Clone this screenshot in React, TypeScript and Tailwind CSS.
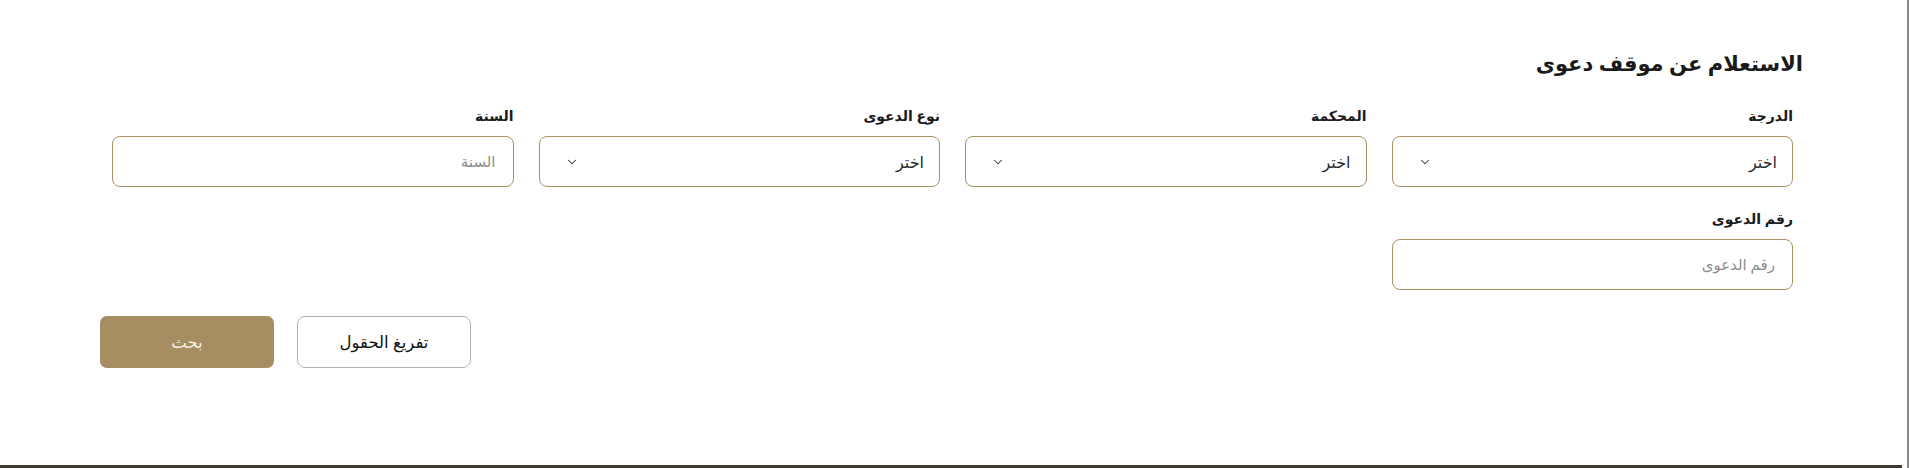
import React from "react";
import { ChevronDown } from "lucide-react";

function Label({ children }: { children: React.ReactNode }) {
  return (
    <div className="text-[14px] leading-[20px] font-bold text-[#1b1b1b] mb-[10px]">{children}</div>
  );
}

function SelectBox({ label }: { label: string }) {
  return (
    <div className="flex flex-col">
      <Label>{label}</Label>
      <div className="h-[51px] rounded-[8px] border border-[#a99163] bg-white flex items-center justify-between pr-[15px] pl-[25px]">
        <span className="text-[16px] text-[#2b2b2b]">اختر</span>
        <ChevronDown size={14} strokeWidth={1.75} className="text-[#333]" />
      </div>
    </div>
  );
}

function InputBox({ label }: { label: string }) {
  return (
    <div className="flex flex-col">
      <Label>{label}</Label>
      <div className="h-[51px] rounded-[8px] border border-[#a99163] bg-white flex items-center pr-[17px]">
        <span className="text-[15px] text-[#8c8c8c]">{label}</span>
      </div>
    </div>
  );
}

export default function App() {
  return (
    <div
      dir="rtl"
      className="w-[1909px] h-[468px] bg-white flex flex-row overflow-hidden"
      style={{ fontFamily: '"Noto Sans", "DejaVu Sans", sans-serif' }}
    >
      <div className="w-[2px] h-full bg-[#8a8a8a]" />
      <div className="w-[5px] h-full" />
      <div className="flex-1 h-full border-b-[3px] border-[#3e3a2d] flex flex-col pr-[99px] pl-[100px] pt-[48px]">
        <h1 className="text-[21px] leading-[30px] font-bold text-[#1a1a1a]">الاستعلام عن موقف دعوى</h1>
        <div className="mt-[28px] pr-[10px] pl-[12px] grid grid-cols-4 gap-x-[25px] gap-y-[22px]">
          <SelectBox label="الدرجة" />
          <SelectBox label="المحكمة" />
          <SelectBox label="نوع الدعوى" />
          <InputBox label="السنة" />
          <InputBox label="رقم الدعوى" />
        </div>
        <div className="mt-[26px] flex justify-end gap-[23px]">
          <button className="w-[174px] h-[52px] rounded-[8px] border border-[#b3b3b3] bg-white text-[16.5px] text-[#111]">
            تفريغ الحقول
          </button>
          <button className="w-[174px] h-[52px] rounded-[7px] bg-[#a68e62] text-[16.5px] text-[#f7f2e8]">
            بحث
          </button>
        </div>
      </div>
    </div>
  );
}
